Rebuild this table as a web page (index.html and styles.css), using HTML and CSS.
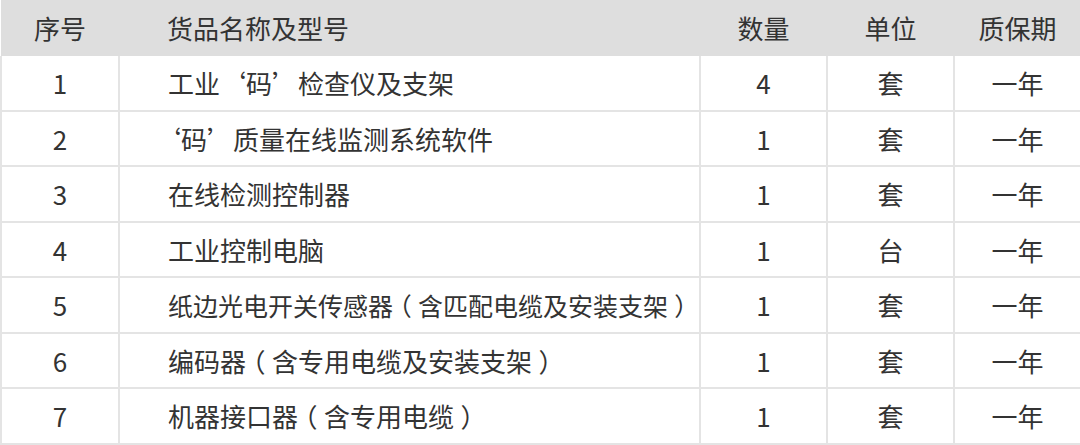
FILE: index.html
```html
<!DOCTYPE html>
<html lang="zh-CN">
<head>
<meta charset="utf-8">
<link rel="stylesheet" href="styles.css">
</head>
<body>
<table class="goods">
  <colgroup>
    <col class="c-no">
    <col class="c-name">
    <col class="c-qty">
    <col class="c-unit">
    <col class="c-warranty">
  </colgroup>
  <thead>
    <tr>
      <th>序号</th>
      <th class="name">货品名称及型号</th>
      <th>数量</th>
      <th>单位</th>
      <th>质保期</th>
    </tr>
  </thead>
  <tbody>
    <tr><td>1</td><td class="name">工业‘码’检查仪及支架</td><td>4</td><td>套</td><td>一年</td></tr>
    <tr><td>2</td><td class="name">‘码’质量在线监测系统软件</td><td>1</td><td>套</td><td>一年</td></tr>
    <tr><td>3</td><td class="name">在线检测控制器</td><td>1</td><td>套</td><td>一年</td></tr>
    <tr><td>4</td><td class="name">工业控制电脑</td><td>1</td><td>台</td><td>一年</td></tr>
    <tr><td>5</td><td class="name long">纸边光电开关传感器<span class="paren">（</span>含匹配电缆及安装支架<span class="paren">）</span></td><td>1</td><td>套</td><td>一年</td></tr>
    <tr><td>6</td><td class="name">编码器<span class="paren">（</span>含专用电缆及安装支架<span class="paren">）</span></td><td>1</td><td>套</td><td>一年</td></tr>
    <tr><td>7</td><td class="name">机器接口器<span class="paren">（</span>含专用电缆<span class="paren">）</span></td><td>1</td><td>套</td><td>一年</td></tr>
  </tbody>
</table>
</body>
</html>
```

FILE: styles.css
```css
html, body {
  margin: 0;
  padding: 0;
  background: #ffffff;
}

body {
  font-family: "Noto Sans CJK SC", "Noto Sans", sans-serif;
  color: #333333;
}

.goods {
  width: 1080px;
  border-collapse: collapse;
  table-layout: fixed;
}

.c-no { width: 118px; }
.c-name { width: 581px; }
.c-qty { width: 127px; }
.c-unit { width: 127px; }
.c-warranty { width: 127px; }

.goods th,
.goods td {
  font-size: 26px;
  font-weight: 400;
  text-align: center;
  padding: 0;
  white-space: nowrap;
  line-height: 1.2;
}

.goods thead th {
  background: #dedede;
  height: 56px;
  border: none;
  color: #333333;
}

.goods tbody td {
  height: 53.5px;
  border: 2px solid #e4e4e4;
  border-top: none;
}

.goods .name {
  text-align: left;
  padding-left: 48px;
  text-spacing-trim: trim-start;
}

.goods .long {
  font-size: 25px;
}

.paren {
  font-feature-settings: "halt" 1;
  text-spacing-trim: space-all;
  padding: 0 0.25em;
}
```
